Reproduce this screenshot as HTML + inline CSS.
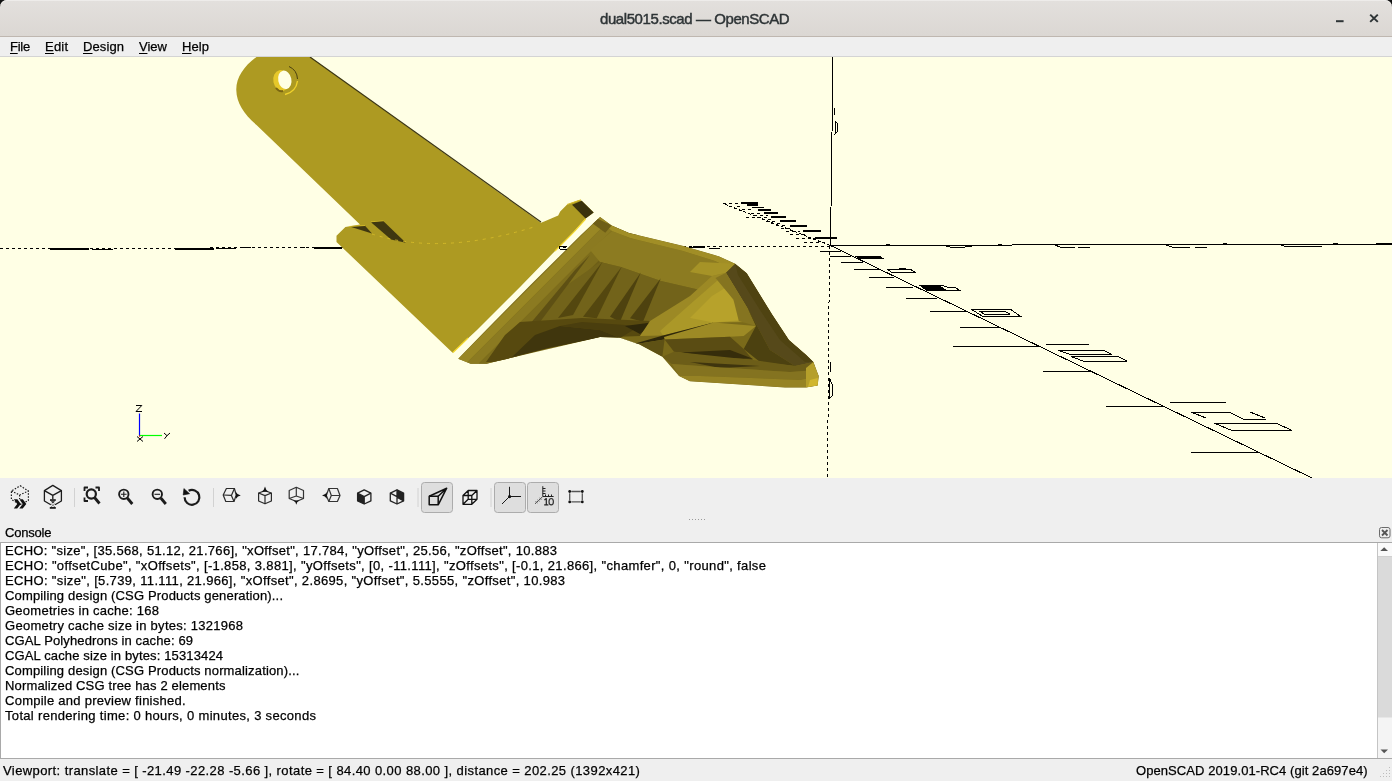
<!DOCTYPE html>
<html><head><meta charset="utf-8">
<style>
html,body{margin:0;padding:0;width:1392px;height:781px;overflow:hidden;background:#efefef;}
body{position:relative;font-family:"Liberation Sans",sans-serif;color:#000;}
.a{position:absolute;}
.tx{position:absolute;white-space:pre;line-height:normal;color:#000;font-family:"Liberation Sans",sans-serif;will-change:transform;-webkit-text-stroke:0.25px #000;}
.tx u{text-decoration:underline;text-underline-offset:2px;}
#corner{left:0;top:0;width:1392px;height:12px;background:#111;}
#title{left:0;top:0;width:1392px;height:37px;background:linear-gradient(#e3e0dd,#dbd7d3);border-radius:7px 7px 0 0;border-bottom:1px solid #bfb7b0;box-sizing:border-box;box-shadow:inset 0 1px #eeecea;}
#menu{left:0;top:37px;width:1392px;height:20px;background:#efefef;border-bottom:1px solid #d4d4d4;box-sizing:border-box;}
#vp{left:0;top:57px;width:1392px;height:421px;background:#ffffe5;overflow:hidden;}
#txt{left:0;top:542px;width:1392px;height:217px;background:#fff;border:1px solid #a9a9a9;box-sizing:border-box;}
</style></head><body>
<div class="a" id="corner"></div>
<div class="a" id="title"></div>
<div class="a" id="menu"></div>
<div class="a" id="vp"><svg class="a" style="left:0;top:0" width="1392" height="421" viewBox="0 57 1392 421">
<g fill="none" stroke="#000" stroke-width="1" shape-rendering="crispEdges">
<path d="M830.5 246.5 L0 248.5" stroke-dasharray="3 3"/>
<path d="M829.5 246 L827.5 478" stroke-dasharray="3 3"/>
</g>
<g fill="none" stroke="#000" stroke-width="1" shape-rendering="crispEdges">
<path d="M830 245.5 L723 203.5" stroke-dasharray="3 2"/>
<path d="M833 57 L830.5 245.5"/>
<path d="M830.5 245.5 L1392 244"/>
<path d="M830.5 245.5 L1312 478"/>
</g>
<path d="M820 251.3 H840.5 M830 256.2 H851 M841 262.4 H863.4 M854 269.5 H878.5 M869 277.4 H894 M886 287.3 H913 M906 298.4 H937 M930 311.5 H966 M960 327.3 H999 M953 346.8 H1040.6 M1043.4 371.8 H1092 M1106 406.3 H1162.7 M1191 452.3 H1259" stroke="#000" stroke-width="1" fill="none" shape-rendering="crispEdges"/>
<g fill="none" stroke="#000" stroke-width="1" shape-rendering="crispEdges">
<path d="M856 256.5 H880 L883 258.5 H859 Z" fill="#000"/>
<path d="M887 269 H905 L910 269 L915.5 272.5 H892 Z M899 268 H906"/>
<path d="M920 285.5 H943 L948 287.5 H955 L960 290.5 H927 Z" />
<path d="M921 286.5 H940 L944 289 H926 Z" fill="#000"/>
<path d="M971 309 H1010 L1020 316 H982 Z M980 311.5 H1005 L1010 314 H984 Z"/>
<path d="M1046 344.5 H1089 M1058 350.5 H1104 L1112 354.5 H1071 Z M1071 356.5 H1118 L1127 361 H1083 Z"/>
<path d="M1170 402 H1226 M1191 412 H1229 L1243 419 H1266 M1250 412 L1265 418 M1214 423 H1276 L1292 430.5 H1232 Z M1191 412 L1206 418"/>
</g>
<g fill="#000" shape-rendering="crispEdges"><rect x="741" y="202" width="17" height="2"/><rect x="747" y="204" width="11" height="2"/><rect x="752" y="207" width="12" height="1"/><rect x="758" y="209" width="13" height="2"/><rect x="764" y="212" width="14" height="2"/><rect x="771" y="216" width="15" height="2"/><rect x="780" y="220" width="16" height="2"/><rect x="790" y="225" width="17" height="2"/><rect x="803" y="230" width="18" height="2"/><rect x="815" y="236.5" width="22" height="2"/></g>
<path d="M723 203.5 H741 M737 206.5 H742 M742 209.5 H754 M751 213.5 H762 M754 215.5 H768 M746 217.5 H768 M762 219.5 H772 M766 221.5 H776 M771 223.5 H781 M776 225.5 H786 M781 228.5 H790 M786 231.5 H800 M790 234.5 H806 M796 238.5 H815 M804 242.5 H825" stroke="#000" stroke-dasharray="3 3" fill="none" shape-rendering="crispEdges"/>
<g fill="none" stroke="#000" stroke-width="1" shape-rendering="crispEdges">
<path d="M834.5 107.5 V115 M835 121 V133.5 L837 132 V123 Z"/>
<path d="M830 362 V372 M829.5 378 V398 L832 396 V384 Z"/>
<path d="M943 245 L950 247 H965 L972 246 M1055 245 L1060 247 H1075 M1078 247.5 H1090 M1166 245 L1172 247 H1190 M1195 247 H1207 M1279 244.5 L1286 246.5 H1300 M1300 246 H1322 M1376 243 H1392" shape-rendering="crispEdges"/>
<path d="M886 245 H890 M998 244.5 H1002 M1112 244.5 H1116 M1223 244 H1227 M1333 243.5 H1338" stroke-width="1.5"/>
<path d="M50 248.5 H89 M50 249.5 H89 M92 249 H113 M175 248.5 H214 M175 249.5 H214 M216 248.5 H236 M241 247.5 H251 M300 247.5 H305 M314 247.5 H342 M314 248.5 H342"/>
</g>
<path d="M256.5 57 H310 L541 222.7 L544.8 221.2 L558.2 215.6 L560.2 211.5 L566.9 204.8 L571 203 L579.2 199.9 L581.7 200.7 L593.7 212.5 L585.6 218.6 L574.5 230.9 L522 285 L477 330 L452.6 352.8 L336.5 242 L336.5 235.7 L345.4 227 L360 224.6 L256.5 125 C244 114 236.5 103 236.3 90 C236 78 244 66 256.5 57 Z" fill="#ad9a22"/>
<path d="M310 57 L541 222" stroke="#3a3410" stroke-width="1.2" fill="none"/>
<polygon points="349.6,226.5 365,225.8 372,233.5" fill="#3f3710"/><path d="M349 226.5 L365 225.5 M371 222 L383.5 221" stroke="#e0c42a" stroke-width="0.8"/>
<polygon points="371,222.3 383.5,221.2 405.8,242.7 391,239.6" fill="#3f3710"/>
<polygon points="572,204.8 581.7,200.7 593.7,212.5 585.6,218.6" fill="#3a320d"/><path d="M567 204.5 L581 199.8" stroke="#d8bc28" stroke-width="1"/>
<path d="M372 234 Q440 256 532.5 227.4" stroke="#d9be2a" stroke-width="0.8" stroke-dasharray="3 5" fill="none"/>
<path d="M585.6 219 L574.5 231.3 L555 251" stroke="#f4d82c" stroke-width="1.2" fill="none"/><path d="M453 352.5 L468 338" stroke="#f4d82c" stroke-width="1.2" fill="none"/>
<ellipse cx="281.5" cy="80.5" rx="8.2" ry="10.5" fill="#e6c82a" transform="rotate(-12 281.5 80.5)"/>
<path d="M276 88 Q279 92 283 91" stroke="#7a6512" stroke-width="2" fill="none"/>
<ellipse cx="284.8" cy="79.8" rx="6.6" ry="9.3" fill="#ffffe5" transform="rotate(-12 284.8 79.8)"/>
<path d="M289 66.5 Q297 70 297.5 79" stroke="#4a4010" stroke-width="1" fill="none"/>
<path d="M297.5 81 Q296 92 285 94.5" stroke="#f0d22c" stroke-width="1.4" fill="none"/>
<polygon points="600,217 611.6,225.5 629,233 683.4,245.9 719.3,256.4 735.2,263.8 746.8,273.3 772.2,314.6 789,340 806,354.7 813.4,362 818.7,375.9 817.7,385.4 806,387.5 785,387.5 689.8,381.2 679,375.9 662.3,356.8 639,344.2 620,337.8 600,337 496.5,361.3 486.6,363.8 470.7,363.8 458.2,358.7 486.1,330 530.5,285 580.9,235" fill="#7a6a1a"/>
<clipPath id="dc"><polygon points="600,217 611.6,225.5 629,233 683.4,245.9 719.3,256.4 735.2,263.8 746.8,273.3 772.2,314.6 789,340 806,354.7 813.4,362 818.7,375.9 817.7,385.4 806,387.5 785,387.5 689.8,381.2 679,375.9 662.3,356.8 639,344.2 620,337.8 600,337 496.5,361.3 486.6,363.8 470.7,363.8 458.2,358.7 486.1,330 530.5,285 580.9,235"/></clipPath><g clip-path="url(#dc)">
<polygon points="621.2206847268876,195.79428049506365 436.9793152731124,379.90571950493637 443.34103112459326,386.27192492300264 627.5824005783685,202.16048591312995" fill="#998724"/>
<polygon points="627.5824005783685,202.16048591312995 443.34103112459326,386.27192492300264 449.7027469760742,392.638130341069 633.9441164298494,208.52669133119622" fill="#8b7a21"/>
<polygon points="633.9441164298494,208.52669133119622 449.7027469760742,392.638130341069 458.18503477804876,401.126404231824 642.426404231824,217.01496522195126" fill="#7d6d1c"/>
<polygon points="642.426404231824,217.01496522195126 458.18503477804876,401.126404231824 465.25360794636083,408.1999658074532 649.4949774001361,224.08852679758047" fill="#6e5f18"/>
<polygon points="612,231 630,238 683,251 715,261 730,268 726,272.7 700,290 661,281 621,267 600,262 590,250" fill="#8c7b21"/>
<polygon points="600,262 621,267 661,281 700,290 690,310 660,331 600,322 530,324 560,290" fill="#72631a"/>
<polygon points="602.5,261.7 573,315 558,318" fill="#54470f"/>
<polygon points="621.7,266.7 596.7,318.3 583,316.7" fill="#54470f"/>
<polygon points="640.8,272.5 620,321.7 610,316.7" fill="#4e420f"/>
<polygon points="660.8,278.3 643,321.7 630,318.3" fill="#4e420f"/>
<polygon points="590,255 540,322 530,324 575,270" fill="#5e5014"/>
<polygon points="611.6,225.5 629,233 683.4,245.9 719.3,256.4 735.2,263.8 730,268 715,261 683,251 630,238 612,231 604,224" fill="#a18e26"/>
<polygon points="597.3,218.4 611.6,225.5 605.3,232.7 592.3,223.3" fill="#6e5e17"/>
<polygon points="486,362 505,335 520,322 582,318 650,321 640,336 600,337.6 547.2,348.3 496.5,362" fill="#57490f"/>
<polygon points="512,357 535,335 560,326 600,330 620,338 600,337.6 547.2,348.3" fill="#40360d"/>
<polygon points="560,326 582,322 640,326 620,338 600,330" fill="#4a3e0e"/>
<polygon points="625,326 655,322 640,334" fill="#2f280a"/>
<polygon points="640,336 650,321 690,296 712,276 726,272.7 745,300 752,322 713.7,322.5 663,335.5" fill="#9c8925"/>
<polygon points="660,331 695,300 718,280 738,300 746,321 713.7,322.5 663,335.5" fill="#ab9828"/>
<polygon points="690,318 712,296 725,288 740,310 742,320 713.7,322.5" fill="#b7a22b"/>
<polygon points="700,262 735.2,263.8 726,272.7 712,276 690,272" fill="#a69327"/>
<polygon points="630,345 663,335.5 713.7,322.5 690,331 664,339.6" fill="#2e270a"/>
<polygon points="664,337 713.7,322.5 756,326 743.7,336 730,336.8 664.6,339.6" fill="#9d8a25"/>
<polygon points="735.2,263.8 746.8,273.3 772.2,314.6 789,340 806,354.7 813.4,362 795,366 770,350 747.7,308.6 726,272.7" fill="#56491a"/>
<polygon points="735.2,263.8 746.8,273.3 772.2,314.6 789,340 806,354.7 813.4,362 805,362 780,340 760,310 738,275" fill="#4f4311"/>
<polygon points="726,272.7 747.7,308.6 756,326 738.8,321 733.4,299.6 715.5,278" fill="#857420"/>
<polygon points="747.7,308.6 770,350 795,366 760,362 743.7,349 756,326" fill="#4c4110"/>
<polygon points="664.6,339.6 730,336.8 743.7,349 753,360 674,351.8" fill="#5a4c13"/>
<polygon points="681,352.5 730,350 753,358.7 720,358" fill="#362d0b"/>
<polygon points="662.3,356.8 674,351.8 753,360 795,366 813.4,362 816,370 790,372 700,366 672,364" fill="#6c5d18"/>
<polygon points="690,362 760,366 720,368" fill="#3f350e"/>
<polygon points="672,364 700,366 790,372 816,370 818.7,375.9 800,380 700,376 679,375.9" fill="#847320"/>
<polygon points="679,375.9 700,376 800,380 818.7,375.9 817.7,385.4 806,387.5 785,387.5 689.8,381.2" fill="#968324"/>
<polygon points="806,368 813.4,362 818.7,375.9 817.7,385.4 806,387.5" fill="#b59f2a"/>
<polygon points="810,380 817.7,378 817.7,385.4 808,387" fill="#d0b62e"/>
<polygon points="620,337.8 639,344.2 662.3,356.8 664.6,339.6 630,345" fill="#5e5114"/>
</g>
<path d="M139.5 413.5 V436" stroke="#0000ff" stroke-width="1.2"/>
<path d="M139.5 435.5 H162" stroke="#00ff00" stroke-width="1.2"/>
<path d="M136 405.5 H141.8 L136 411.5 H142" stroke="#000" stroke-width="1" fill="none"/>
<path d="M137 436.5 L143 441.5 M143 436.5 L137 441.5" stroke="#000" stroke-width="1"/>
<path d="M164 433 L167 435.7 L170 433 M167 435.7 L164.5 438.8" stroke="#000" stroke-width="1" fill="none"/>
<rect x="139" y="435.5" width="1.2" height="1.2" fill="#f00"/>
<g fill="#000" shape-rendering="crispEdges"><rect x="693" y="246" width="12" height="2"/><rect x="689" y="247" width="4" height="1"/><rect x="709" y="248" width="11" height="1"/><rect x="559" y="246" width="8" height="1"/><rect x="560" y="249" width="7" height="1"/><rect x="559" y="246" width="1" height="3"/></g>
</svg></div>
<div class="a" id="txt"></div>
<svg class="a" style="left:0;top:478px" width="1392" height="42" viewBox="0 478 1392 42">
<g fill="none" stroke="#1c1c1c" stroke-linejoin="round" stroke-linecap="butt">
<!-- checked buttons -->
<rect x="421.5" y="482.5" width="31" height="30" rx="3" fill="#dedede" stroke="#acacac"/>
<rect x="494.5" y="482.5" width="31" height="30" rx="3" fill="#dedede" stroke="#acacac"/>
<rect x="527.5" y="482.5" width="31" height="30" rx="3" fill="#dedede" stroke="#acacac"/>
<!-- separators -->
<path d="M74.5 488V507 M213.5 488V507 M418 488V507 M491 488V507" stroke="#d2d2d2"/>
<!-- 1 preview -->
<g stroke-width="1.2" stroke-dasharray="1.5 1.5">
<path d="M20.2 485.7 L28.4 491 L28.4 500.5 L20.2 504.5 L11.4 499.5 L11.4 491 Z"/>
<path d="M11.4 491 L19.6 495 L28.4 491 M19.6 495 V499"/>
</g>
<path d="M13.9 499.2 H17.4 L20.8 504 L17.2 508.6 H13.8 L17.2 504 Z M19.4 499.2 H22.8 L26.3 504 L22.7 508.6 H19.3 L22.7 504 Z" fill="#111" stroke="none"/>
<!-- 2 render -->
<g stroke-width="1.3">
<path d="M50.8 504.8 L44.4 501 L44.4 490.6 L52.8 485.4 L61.4 490.6 L61.4 501 L55 504.8"/>
<path d="M44.4 490.6 L52.8 495.4 L61.4 490.6 M52.8 495.4 V499.2"/>
</g>
<rect x="50" y="499.2" width="5.8" height="1.7" fill="#1c1c1c" stroke="none"/>
<path d="M50.8 501.3 H55 L52.9 503.6 Z" fill="#1c1c1c" stroke="none"/>
<path d="M50.8 507 L55 503.6 M50.8 503.6 L55 507" stroke="#888" stroke-width="1"/>
<rect x="49.8" y="507" width="6" height="1.8" fill="#1c1c1c" stroke="none"/>
<!-- 3 view all -->
<path d="M84.5 491 V487.5 H88 M95.5 487.5 H99 V491 M84.5 497.5 V501 H88" stroke-width="1.8"/>
<circle cx="91.3" cy="494" r="4.6" stroke-width="2.2"/>
<path d="M94.5 497.5 L99.5 503.5" stroke-width="2.8"/>
<!-- 4 zoom in -->
<circle cx="123.8" cy="494.3" r="4.7" stroke-width="1.9"/>
<path d="M121 494.3 H126.6 M123.8 491.5 V497.1" stroke-width="1.1"/>
<path d="M127.3 498 L132.3 504" stroke-width="2.8"/>
<!-- 5 zoom out -->
<circle cx="157.3" cy="494.3" r="4.7" stroke-width="1.9"/>
<path d="M154.5 494.3 H160.1" stroke-width="1.1"/>
<path d="M160.8 498 L165.8 504" stroke-width="2.8"/>
<!-- 6 reset -->
<path d="M184.6 497.3 A7.4 7.4 0 1 0 188.6 490.8" stroke-width="2.2"/>
<path d="M183.9 488.6 L189.6 493.7 L183.2 495 Z" fill="#111" stroke="#111" stroke-width="0.6"/>
<!-- 7 right -->
<g stroke-width="1.2" stroke="#2a2a2a">
<path d="M226.4 488.5 H234.4 L236.2 495 L234 501.5 H225.8 L223.2 495 Z"/>
<path d="M223.2 495 L231.4 495.4 L234.4 488.5 M231.4 495.4 L234 501.5"/>
</g>
<path d="M236 492.3 Q237.5 495 240.8 495.6 Q237.5 496.2 236 498.8 Z" fill="#111" stroke="none"/>
<!-- 8 top -->
<g stroke-width="1.2" stroke="#2a2a2a">
<path d="M265 490.8 L271.4 493 L271.4 501 L265 503.8 L258.6 501 L258.6 493 Z"/>
<path d="M258.6 493 L265 495.6 L271.4 493 M265 495.6 V503.5"/>
</g>
<path d="M265 486.5 Q265.8 490.5 268.6 491.8 H261.4 Q264.2 490.5 265 486.5 Z" fill="#111" stroke="none"/>
<!-- 9 bottom -->
<g stroke-width="1.2" stroke="#333">
<path d="M296.3 487.3 L303.5 490.5 L303.5 498.5 L296.3 501.5 L289.2 498.5 L289.2 490.5 Z"/>
<path d="M296.3 487.3 V496 L289.2 498.5 M296.3 496 L303.5 498.5"/>
</g>
<path d="M293.2 500.5 Q295.8 501.5 296.3 504.8 Q296.8 501.5 299.4 500.5 Z" fill="#111" stroke="none"/>
<!-- 10 left -->
<g stroke-width="1.2" stroke="#333">
<path d="M328.8 488.5 H337.4 L340 495.5 L337.4 501.5 H328.8 L326.3 495.5 Z"/>
<path d="M328.8 488.5 L331.3 495.5 L328.8 501.5 M331.3 495.5 L340 495.5"/>
</g>
<path d="M326.8 492.3 Q325.3 495 322 495.6 Q325.3 496.2 326.8 498.8 Z" fill="#111" stroke="none"/>
<!-- 11 front -->
<path d="M357.6 493.2 L364.2 496.6 L364.2 504 L357.6 500.9 Z" fill="#222" stroke="none"/>
<g stroke-width="1.3" stroke="#222">
<path d="M364.2 489.8 L370.9 493.2 L370.9 500.9 L364.2 504 L357.6 500.9 L357.6 493.2 Z"/>
<path d="M357.6 493.2 L364.2 496.6 L370.9 493.2 M364.2 496.6 V504"/>
</g>
<!-- 12 back -->
<path d="M397 489.8 L403.6 493.2 L403.6 500.9 L397 497.2 Z" fill="#222" stroke="none"/>
<g stroke-width="1.3" stroke="#222">
<path d="M397 489.8 L403.6 493.2 L403.6 500.9 L397 504 L390.3 500.9 L390.3 493.2 Z"/>
<path d="M390.3 493.2 L397 496.6 M397 489.8 V504 M397 497.2 L403.6 500.9"/>
</g>
<!-- 13 perspective -->
<g stroke-width="1.5" stroke="#111">
<rect x="429.2" y="496.2" width="9" height="8.6"/>
<path d="M429.2 496.2 L446.7 488.2 L438.2 496.2 M438.2 504.8 L446.7 488.2"/>
</g>
<!-- 14 ortho -->
<g stroke-width="1.3" stroke="#111">
<path d="M463 495.5 H471.8 V504.3 H463 Z M468.2 490.5 H477 V499.3 H468.2 Z M463 495.5 L468.2 490.5 M471.8 495.5 L477 490.5 M471.8 504.3 L477 499.3 M463 504.3 L468.2 499.3"/>
</g>
<!-- 15 axes -->
<g stroke-width="1" stroke="#1a1a1a">
<path d="M509.5 486.8 V496.5 H521 M509.5 496.5 L502 504"/>
</g>
<circle cx="509.6" cy="496.6" r="1.6" fill="#111" stroke="none"/>
<!-- 16 scale -->
<g stroke-width="1" stroke="#222">
<path d="M542.8 486.2 V496.5 H553.6"/>
<path d="M542.8 488.5 H545.5 M542.8 491 H545.5 M542.8 493.5 H545.5 M545.5 496.5 V494.5 M548.5 496.5 V494.5 M551.5 496.5 V494.5"/>
<path d="M542.5 496.8 L535 503.8" stroke="#444"/>
<path d="M535.5 501.5 L537.5 503 M537.5 499.8 L539.5 501.3 M539.5 498 L541.5 499.5" stroke="#666"/>
</g>
<path d="M544.4 500 L546.3 498.6 V504.8 M544.2 504.8 H548.4" stroke="#222" stroke-width="1.2" fill="none"/><ellipse cx="551.2" cy="501.7" rx="2.2" ry="3.2" stroke="#333" stroke-width="1.2" fill="none"/>
<!-- 17 edges -->
<path d="M571.3 491.5 H580.7 M571.3 501.9 H580.7 M569.7 493.2 V500.2 M582.3 493.2 V500.2" stroke="#555" stroke-width="1.3"/>
<g fill="#111" stroke="none"><circle cx="569.7" cy="491.5" r="1.4"/><circle cx="582.3" cy="491.5" r="1.4"/><circle cx="569.7" cy="501.9" r="1.4"/><circle cx="582.3" cy="501.9" r="1.4"/></g>
</g>
</svg>
<svg class="a" style="left:0;top:0" width="1392" height="781" viewBox="0 0 1392 781">
<!-- window controls -->
<path d="M1336 21.2 H1343.6" stroke="#2e3436" stroke-width="2"/>
<path d="M1370.2 14.6 L1377.8 21.9 M1377.8 14.6 L1370.2 21.9" stroke="#2e3436" stroke-width="2"/>
<!-- splitter dots -->
<g fill="#9a9a9a"><rect x="689" y="519" width="1" height="1"/><rect x="692" y="519" width="1" height="1"/><rect x="695" y="519" width="1" height="1"/><rect x="698" y="519" width="1" height="1"/><rect x="701" y="519" width="1" height="1"/><rect x="704" y="519" width="1" height="1"/></g>
<!-- console close -->
<rect x="1379.5" y="527.5" width="10.5" height="10.3" rx="2" fill="none" stroke="#6b6b6b" stroke-width="1"/>
<path d="M1382 530 L1387.5 535.5 M1387.5 530 L1382 535.5" stroke="#555" stroke-width="1.8"/>
<!-- scrollbar -->
<rect x="1377.5" y="543" width="14.5" height="215" fill="#f4f4f4"/>
<path d="M1377.5 543 V758" stroke="#c4c4c4" stroke-width="1"/>
<rect x="1378" y="556.5" width="14" height="161" fill="#dadada"/>
<rect x="1378" y="543" width="14" height="13.5" fill="#fafafa"/><path d="M1378 556.5 H1392" stroke="#d0d0d0"/><path d="M1380.3 551 L1388 551 L1384.15 547.2 Z" fill="#555"/>
<path d="M1380.5 749.5 L1388 749.5 L1384.2 753.3 Z" fill="#555"/>
<!-- size grip -->
<g fill="#bdbdbd"><rect x="1389" y="767" width="1" height="1"/><rect x="1386" y="770" width="1" height="1"/><rect x="1389" y="770" width="1" height="1"/><rect x="1383" y="773" width="1" height="1"/><rect x="1386" y="773" width="1" height="1"/><rect x="1389" y="773" width="1" height="1"/><rect x="1380" y="776" width="1" height="1"/><rect x="1383" y="776" width="1" height="1"/><rect x="1386" y="776" width="1" height="1"/><rect x="1389" y="776" width="1" height="1"/></g>
</svg>
<div class="tx" style="left:5.0px;top:543.2px;font-size:13px;letter-spacing:0.304px;">ECHO: "size", [35.568, 51.12, 21.766], "xOffset", 17.784, "yOffset", 25.56, "zOffset", 10.883</div>
<div class="tx" style="left:5.0px;top:558.2px;font-size:13px;letter-spacing:0.349px;">ECHO: "offsetCube", "xOffsets", [-1.858, 3.881], "yOffsets", [0, -11.111], "zOffsets", [-0.1, 21.866], "chamfer", 0, "round", false</div>
<div class="tx" style="left:5.0px;top:573.2px;font-size:13px;letter-spacing:0.341px;">ECHO: "size", [5.739, 11.111, 21.966], "xOffset", 2.8695, "yOffset", 5.5555, "zOffset", 10.983</div>
<div class="tx" style="left:5.0px;top:588.2px;font-size:13px;letter-spacing:0.160px;">Compiling design (CSG Products generation)...</div>
<div class="tx" style="left:5.0px;top:603.2px;font-size:13px;letter-spacing:0.255px;">Geometries in cache: 168</div>
<div class="tx" style="left:5.0px;top:618.2px;font-size:13px;letter-spacing:0.268px;">Geometry cache size in bytes: 1321968</div>
<div class="tx" style="left:5.0px;top:633.2px;font-size:13px;letter-spacing:0.124px;">CGAL Polyhedrons in cache: 69</div>
<div class="tx" style="left:5.0px;top:648.2px;font-size:13px;letter-spacing:0.138px;">CGAL cache size in bytes: 15313424</div>
<div class="tx" style="left:5.0px;top:663.2px;font-size:13px;letter-spacing:0.161px;">Compiling design (CSG Products normalization)...</div>
<div class="tx" style="left:5.0px;top:678.2px;font-size:13px;letter-spacing:0.154px;">Normalized CSG tree has 2 elements</div>
<div class="tx" style="left:5.0px;top:693.2px;font-size:13px;letter-spacing:0.256px;">Compile and preview finished.</div>
<div class="tx" style="left:5.0px;top:708.2px;font-size:13px;letter-spacing:0.323px;">Total rendering time: 0 hours, 0 minutes, 3 seconds</div>
<div class="tx" style="left:2.5px;top:763.2px;font-size:13px;letter-spacing:0.407px;">Viewport: translate = [ -21.49 -22.28 -5.66 ], rotate = [ 84.40 0.00 88.00 ], distance = 202.25 (1392x421)</div>
<div class="tx" style="left:1135.6px;top:763.2px;font-size:13px;letter-spacing:0.076px;">OpenSCAD 2019.01-RC4 (git 2a697e4)</div>
<div class="tx" style="left:4.5px;top:525.2px;font-size:13px;letter-spacing:-0.217px;">Console</div>
<div class="tx" style="left:600.3px;top:10.4px;font-size:15px;letter-spacing:-0.417px;color:#2e3436;-webkit-text-stroke:0.45px #2e3436;">dual5015.scad — OpenSCAD</div>
<div class="tx" style="left:10.0px;top:39.2px;font-size:13px;letter-spacing:-0.251px;"><u>F</u>ile</div>
<div class="tx" style="left:45.0px;top:39.2px;font-size:13px;letter-spacing:0.198px;"><u>E</u>dit</div>
<div class="tx" style="left:83.0px;top:39.2px;font-size:13px;letter-spacing:0.106px;"><u>D</u>esign</div>
<div class="tx" style="left:139.0px;top:39.2px;font-size:13px;letter-spacing:0.016px;"><u>V</u>iew</div>
<div class="tx" style="left:182.0px;top:39.2px;font-size:13px;letter-spacing:0.083px;"><u>H</u>elp</div>
</body></html>
